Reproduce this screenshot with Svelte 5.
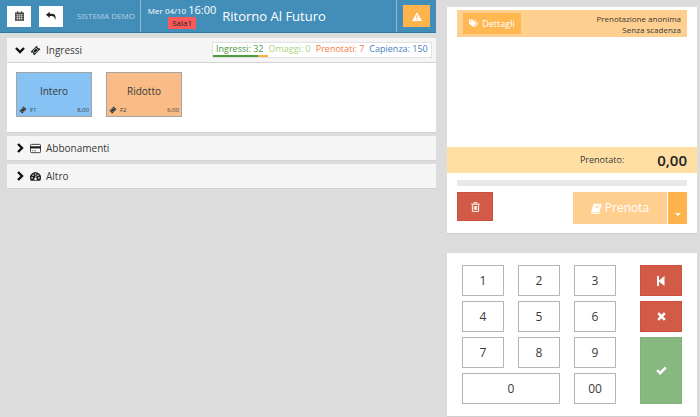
<script lang="ts">
  const tickets = [
    { name: "Intero", key: "F1", price: "8,00", color: "#86c2f3" },
    { name: "Ridotto", key: "F2", price: "6,00", color: "#f9bc86" },
  ];
  const keys = ["1", "2", "3", "4", "5", "6", "7", "8", "9", "0", "00"];
  const capacity = 150;
  const sold = 32;
  const booked = 7;

  let open = $state(true);
  let amount = $state(0);

  function press(key: string) {
    amount = Number(`${amount}${key}`);
  }
</script>

{#snippet ticketIcon()}
  <svg class="icon" viewBox="0 0 16 16" aria-hidden="true">
    <path d="M9.7 1l1.2 1.2a1.6 1.6 0 0 0 2.2 2.2L15 6.300l-8.700 8.700-1.700-1.700a1.600 1.600 0 0 0-2.200-2.200L1 9.700z" fill="currentColor" />
    <path d="M8.700 4.200l3.200 3.200-4.500 4.500-3.200-3.200z" fill="none" stroke="#ddd" stroke-width="1" />
  </svg>
{/snippet}

{#snippet chevron(down: boolean)}
  <svg class="chevron" viewBox="0 0 10 10" aria-hidden="true">
    <path d={down ? "M1 3l4 4 4-4" : "M3 1l4 4-4 4"} fill="none" stroke="#111" stroke-width="2.400" />
  </svg>
{/snippet}

<div class="app">
  <main>
    <header>
      <button class="tool" aria-label="Calendario">
        <svg width="9" height="10" viewBox="0 0 14 15">
          <path d="M0 2h14v13H0z" fill="#444" />
          <path d="M3 0h2v3H3zM9 0h2v3H9z" fill="#444" />
          <path d="M1 5.500h12M1 8.500h12M1 11.500h12M4 5v9M7 5v9M10 5v9" stroke="#ddd" stroke-width=".9" />
        </svg>
      </button>
      <button class="tool" aria-label="Indietro">
        <svg width="10" height="10" viewBox="0 0 16 16">
          <path d="M0 6l6-5v3.300h3c5 0 8 3 5.500 10.200C14 9.500 12 8 9 8H6v3.200z" fill="#222" />
        </svg>
      </button>
      <span class="system">SISTEMA DEMO</span>
      <div class="show">
        <div class="when">
          <div class="date">Mer 04/10 <strong>16:00</strong></div>
          <span class="room">Sala1</span>
        </div>
        <h1>Ritorno Al Futuro</h1>
      </div>
      <div class="alert">
        <button aria-label="Avvisi">
          <svg width="10" height="9" viewBox="0 0 16 14">
            <path d="M8 0l8 14H0z" fill="#fff" />
            <path d="M8 5v4.500M8 10.700v1.600" stroke="#f0ad4e" stroke-width="1.800" />
          </svg>
        </button>
      </div>
    </header>

    <section>
      <div class="bar">
        <button class="toggle" aria-expanded={open} onclick={() => (open = !open)}>
          {@render chevron(open)}
          {@render ticketIcon()}
          Ingressi
        </button>
        <div class="stats">
          <span class="sold">Ingressi: {sold}</span>
          <span class="free">Omaggi: 0</span>
          <span class="booked">Prenotati: {booked}</span>
          <span class="capacity">Capienza: {capacity}</span>
          <div class="meter">
            <i class="meter-sold" style:width="{(sold / capacity) * 100}%"></i>
            <i class="meter-booked" style:width="{(booked / capacity) * 100}%"></i>
          </div>
        </div>
      </div>
      {#if open}
        <div class="tickets">
          {#each tickets as ticket}
            <button class="ticket" style:background={ticket.color}>
              <span class="name">{ticket.name}</span>
              <span class="info">
                {@render ticketIcon()}
                <span>{ticket.key}</span>
                <span class="price">{ticket.price}</span>
              </span>
            </button>
          {/each}
        </div>
      {/if}
    </section>

    <section>
      <div class="bar">
        <button class="toggle" aria-expanded="false">
          {@render chevron(false)}
          <svg class="icon" viewBox="0 0 12 10" aria-hidden="true">
            <rect x=".5" y=".5" width="11" height="9" rx="1" fill="#fff" stroke="#333" />
            <path d="M0 2.500h12V5H0z" fill="#222" />
            <path d="M2 7.500h1.500M4.500 7.500h2" stroke="#333" stroke-width=".8" />
          </svg>
          Abbonamenti
        </button>
      </div>
    </section>

    <section>
      <div class="bar">
        <button class="toggle" aria-expanded="false">
          {@render chevron(false)}
          <svg class="icon" viewBox="0 0 16 14" aria-hidden="true">
            <path d="M1.200 13A8 8 0 1 1 14.800 13z" fill="#222" />
            <g fill="#f5f5f5">
              <circle cx="3" cy="9" r="1.100" />
              <circle cx="4.500" cy="5.200" r="1.100" />
              <circle cx="8" cy="3.500" r="1.100" />
              <circle cx="11.500" cy="5.200" r="1.100" />
              <circle cx="13" cy="9" r="1.100" />
            </g>
            <path d="M8 10.500l1-5" stroke="#f5f5f5" stroke-width="1.200" />
            <circle cx="8" cy="10.500" r="1.800" fill="#f5f5f5" />
          </svg>
          Altro
        </button>
      </div>
    </section>
  </main>

  <aside>
    <div class="card order">
      <div class="booking">
        <button class="details">
          <svg width="10" height="9" viewBox="0 0 18 16" aria-hidden="true">
            <path d="M0 1h6l7 7-6 6.500-7-7zM8 1h1.500l7.500 7-6.500 7-1-1L15 8z" fill="#fff" />
            <circle cx="3" cy="4" r="1.300" fill="#ffb752" />
          </svg>
          Dettagli
        </button>
        <div class="note">
          <p>Prenotazione anonima</p>
          <p>Senza scadenza</p>
        </div>
      </div>
      <div class="total">
        <span>Prenotato:</span>
        <output>0,00</output>
      </div>
      <div class="progress"></div>
      <div class="actions">
        <button class="red trash" aria-label="Elimina">
          <svg width="9" height="10" viewBox="0 0 14 16">
            <path d="M0 3.500h14M4.500 3V1h5v2M2 4v11h10V4M5 6.500v6M7 6.500v6M9 6.500v6" fill="none" stroke="#fff" stroke-width="1.500" />
          </svg>
        </button>
        <div class="split">
          <button class="book">
            <svg width="11" height="11" viewBox="0 0 16 16" aria-hidden="true">
              <path d="M5 1h9.500q1.500 0 1 1.500l-3 9.500q-.5 1.500-2 1.500H2.500q-1 0-.8.800h10l2-1-.7 2.200H2q-2.500-.5-1.700-3L3 3q.5-2 2-2z" fill="#fff" />
              <path d="M6.500 4.200h6M5.700 6.700h6" stroke="#ffcf8f" stroke-width="1" />
            </svg>
            Prenota
          </button>
          <button class="more" aria-label="Altre opzioni">
            <svg width="6" height="3" viewBox="0 0 6 3"><path d="M0 0h6L3 3z" fill="#fff" /></svg>
          </button>
        </div>
      </div>
    </div>

    <div class="card keypad">
      <div class="digits">
        {#each keys as key}
          <button class:double={key === "0"} onclick={() => press(key)}>{key}</button>
        {/each}
      </div>
      <div class="commands">
        <button class="red" aria-label="Azzera" onclick={() => (amount = 0)}>
          <svg width="8" height="10" viewBox="0 0 8 10"><path d="M0 0h2v4.500L7.500 0v10L2 5.500V10H0z" fill="#fff" /></svg>
        </button>
        <button class="red" aria-label="Annulla">
          <svg width="9" height="9" viewBox="0 0 9 9"><path d="M1.200 1.200l6.600 6.600M7.800 1.200L1.200 7.800" stroke="#fff" stroke-width="2.600" /></svg>
        </button>
        <button class="green" aria-label="Conferma">
          <svg width="11" height="9" viewBox="0 0 11 9"><path d="M1.200 4.200l3 3 5.600-5.800" fill="none" stroke="#fff" stroke-width="2.500" /></svg>
        </button>
      </div>
    </div>
  </aside>
</div>

<style>
  :global(body) {
    background: #dcdcdc;
  }
  .app {
    display: grid;
    grid-template-columns: 436fr 250fr;
    align-items: start;
    gap: 11px;
    padding-right: 3px;
    color: #393939;
    font: 10px/16px "Open Sans", sans-serif;
  }
  button {
    display: flex;
    align-items: center;
    justify-content: center;
    box-sizing: border-box;
    margin: 0;
    padding: 0;
    border: 0;
    color: inherit;
    font: inherit;
    cursor: pointer;
  }
  svg {
    flex: none;
  }

  header {
    display: flex;
    align-items: center;
    height: 33px;
    box-sizing: border-box;
    margin-bottom: 5px;
    padding-left: 7px;
    border-bottom: 1px solid #2f77a5;
    background: #438eb9;
    color: #fff;
  }
  .tool {
    width: 24px;
    height: 21px;
    margin-right: 8px;
    background: #fff;
  }
  .system {
    margin: 0 5px 0 6px;
    color: #b4d2e3;
    font-size: 8px;
    white-space: nowrap;
  }
  .show {
    display: flex;
    flex: 1;
    align-items: center;
    align-self: stretch;
    gap: 6px;
    padding-left: 7px;
    border-left: 1px solid #8dbbd5;
  }
  .when {
    display: flex;
    flex-direction: column;
    align-items: center;
    font-size: 8px;
    line-height: 12px;
    white-space: nowrap;
  }
  .date strong {
    font-size: 11px;
    font-weight: 400;
  }
  .room {
    padding: 0 4px;
    background: #fc5a5a;
    color: #222;
  }
  h1 {
    margin: 0;
    font-size: 13px;
    font-weight: 400;
    white-space: nowrap;
  }
  .alert {
    display: flex;
    align-items: center;
    align-self: stretch;
    padding: 0 6px;
    border-left: 1px solid #8dbbd5;
  }
  .alert button {
    width: 27px;
    height: 22px;
    background: #ffb44b;
  }

  section {
    margin: 0 0 3px 7px;
    background: #fff;
  }
  .bar {
    display: flex;
    align-items: center;
    justify-content: space-between;
    height: 24px;
    padding-right: 4px;
    border-bottom: 1px solid #d2d2d2;
    background: #f5f5f5;
  }
  .toggle {
    gap: 5px;
    padding-left: 8px;
    background: none;
  }
  .chevron {
    width: 10px;
    height: 10px;
  }
  .icon {
    width: 11px;
    height: 11px;
    color: #222;
  }
  .stats {
    display: flex;
    flex-wrap: wrap;
    gap: 0 5px;
    width: 212px;
    padding: 0 3px;
    border: 1px solid #e2e2e2;
    background: #fff;
    font-size: 9px;
    line-height: 12px;
    white-space: nowrap;
  }
  .sold {
    color: #4a9a3c;
  }
  .free {
    color: #a9d47f;
  }
  .booked {
    color: #f5783c;
  }
  .capacity {
    color: #3f80bd;
  }
  .meter {
    display: flex;
    width: 100%;
    height: 2px;
    margin: 0 -3px;
  }
  .meter-sold {
    background: #4a9f3c;
  }
  .meter-booked {
    background: #f4b03c;
  }

  .tickets {
    display: flex;
    gap: 14px;
    padding: 9px 9px 15px;
    border-bottom: 1px solid #d2d2d2;
  }
  .ticket {
    flex-direction: column;
    justify-content: space-between;
    width: 76px;
    height: 45px;
    padding: 10px 2px 0;
    border: 1px solid #a4a4a4;
  }
  .info {
    display: flex;
    align-items: center;
    align-self: stretch;
    gap: 3px;
    font-size: 6px;
    line-height: 12px;
  }
  .info .icon {
    width: 8px;
    height: 8px;
  }
  .price {
    margin-left: auto;
  }

  .card {
    border-bottom: 1px solid #cfcfcf;
    background: #fff;
  }
  .order {
    margin: 7px 0 19px;
    padding: 3px 0 9px;
  }
  .booking {
    display: flex;
    align-items: center;
    justify-content: space-between;
    height: 27px;
    margin: 0 10px 110px;
    padding: 0 6px;
    background: #ffcf8f;
  }
  .note {
    font-size: 8px;
    line-height: 11px;
    text-align: right;
  }
  p {
    margin: 0;
  }
  .details {
    gap: 3px;
    width: 58px;
    height: 21px;
    background: #ffb752;
    color: #fff;
    font-size: 9px;
  }
  .total {
    display: flex;
    align-items: center;
    justify-content: flex-end;
    gap: 33px;
    height: 26px;
    padding-right: 10px;
    background: #ffdfa3;
    font-size: 9px;
  }
  .total output {
    color: #222;
    font-size: 15px;
    font-weight: 600;
  }
  .progress {
    height: 6px;
    margin: 7px 10px 6px;
    background: #e8e8e8;
  }
  .actions {
    display: flex;
    align-items: flex-start;
    justify-content: space-between;
    padding: 0 10px;
  }
  .red {
    border: 1px solid #cf4f3b;
    background: #d15b47;
  }
  .trash {
    width: 36px;
    height: 29px;
  }
  .split {
    display: flex;
    gap: 1px;
  }
  .book {
    gap: 3px;
    width: 94px;
    height: 32px;
    background: #ffcf8f;
    color: #fff;
    font-size: 12px;
  }
  .more {
    width: 19px;
    padding-top: 12px;
    background: #ffb44b;
  }

  .keypad {
    display: flex;
    justify-content: space-between;
    gap: 24px;
    padding: 12px 15px;
  }
  .digits {
    display: grid;
    flex: 1;
    grid-template-columns: repeat(3, 1fr);
    grid-auto-rows: 31px;
    gap: 5px 14px;
  }
  .digits button {
    border: 1px solid #b5b5b5;
    background: #fff;
    font-size: 12px;
  }
  .double {
    grid-column: span 2;
  }
  .commands {
    display: grid;
    grid-template-rows: 31px 31px 1fr;
    gap: 5px;
    width: 42px;
  }
  .green {
    border: 1px solid #7fb378;
    background: #87b87f;
  }
</style>
